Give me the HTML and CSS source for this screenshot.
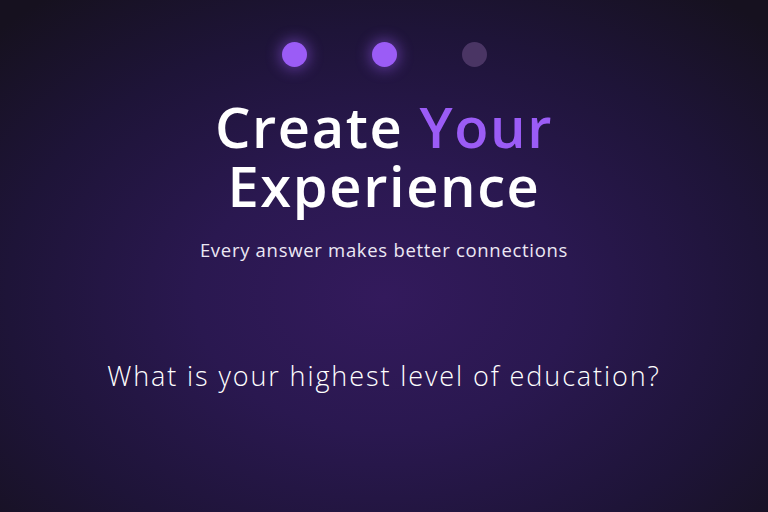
FILE: index.html
```html
<!DOCTYPE html>
<html lang="en">
<head>
<meta charset="utf-8">
<title>Create Your Experience</title>
<link rel="stylesheet" href="styles.css">
</head>
<body>
<main class="screen">
  <div class="steps">
    <span class="dot active"></span>
    <span class="dot active"></span>
    <span class="dot"></span>
  </div>
  <h1 class="title">Create <span class="accent">Your</span><br>Experience</h1>
  <p class="subtitle">Every answer makes better connections</p>
  <h2 class="question">What is your highest level of education?</h2>
</main>
</body>
</html>
```
FILE: styles.css
```css
html, body {
  margin: 0;
  padding: 0;
  height: 100%;
}
body {
  background: radial-gradient(ellipse 70% 75% at 50% 58%, #331a5c 0%, #2a1850 35%, #1e1438 70%, #16111f 100%);
  color: #ffffff;
  font-family: "Open Sans", "Noto Sans", sans-serif;
  overflow: hidden;
}
.screen {
  height: 512px;
  display: flex;
  flex-direction: column;
  align-items: center;
  padding-top: 42px;
  box-sizing: border-box;
}
.steps {
  display: flex;
  gap: 65px;
}
.dot {
  width: 25px;
  height: 25px;
  border-radius: 50%;
  background: #4a3564;
}
.dot.active {
  background: #9b5cf6;
  box-shadow: 0 0 14px 3px rgba(155, 92, 246, 0.45);
}
.title {
  margin: 30px 0 0;
  font-size: 56px;
  line-height: 59px;
  font-weight: 600;
  text-align: center;
  letter-spacing: 1.6px;
}
.accent {
  color: #9b5cf6;
}
.subtitle {
  margin: 22px 0 0;
  font-size: 18.5px;
  line-height: 25px;
  font-weight: 400;
  letter-spacing: 0.7px;
  color: #ece8f4;
}
.question {
  margin: 95px 0 0;
  font-size: 27px;
  line-height: 37px;
  font-weight: 300;
  letter-spacing: 1.9px;
  color: #ffffff;
}
```
